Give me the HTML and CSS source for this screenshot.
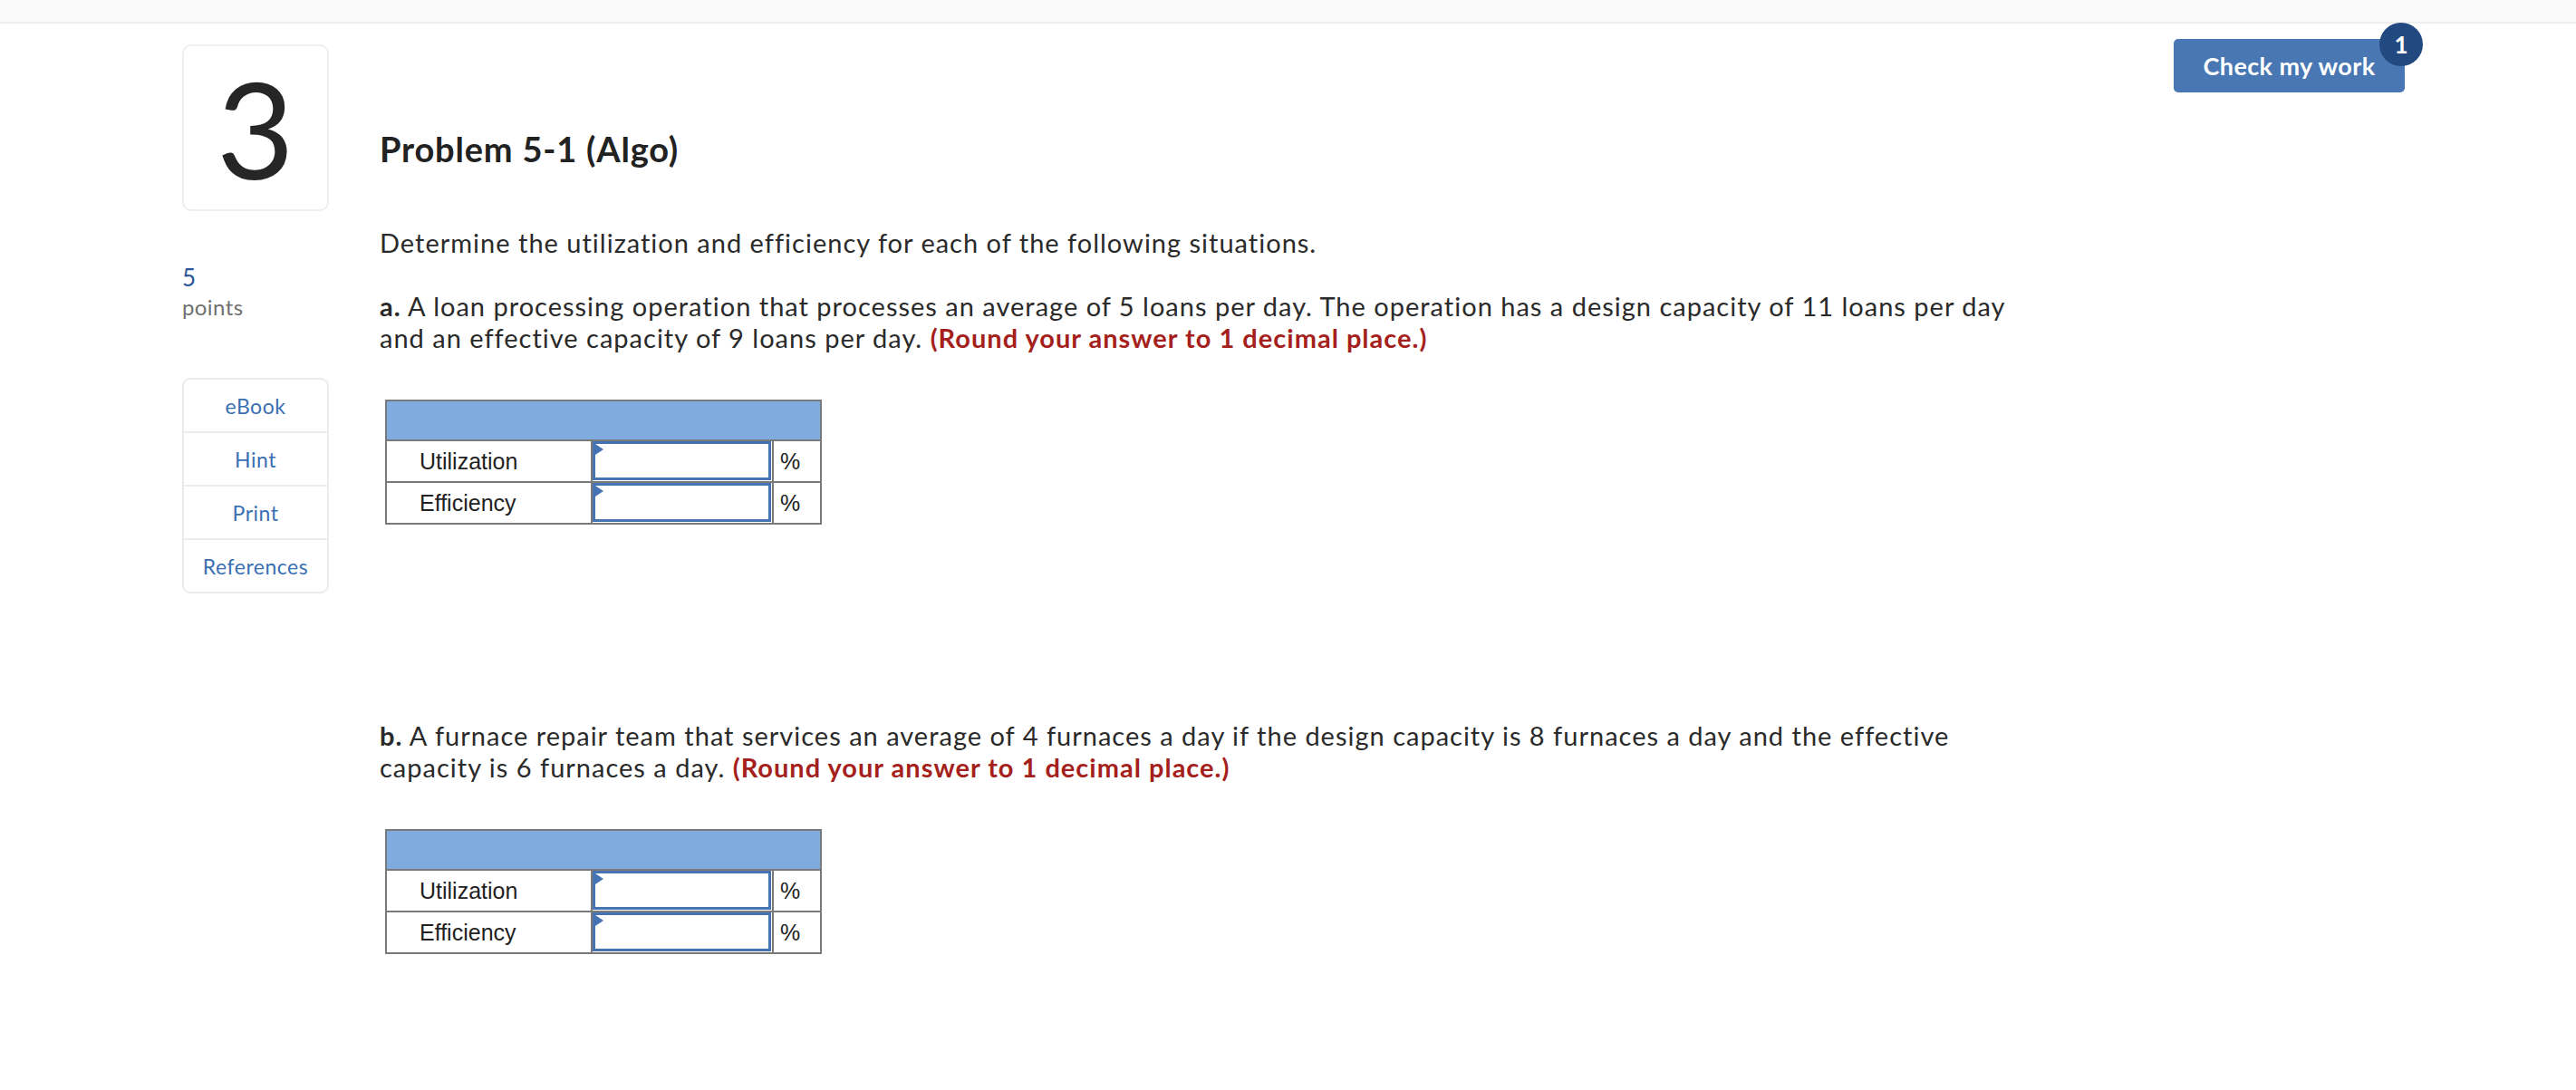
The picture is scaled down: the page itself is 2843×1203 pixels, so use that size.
FILE: index.html
```html
<!DOCTYPE html>
<html lang="en">
<head>
<meta charset="utf-8">
<title>Problem 5-1 (Algo)</title>
<link rel="stylesheet" href="styles.css">
</head>
<body>
<div class="topbar"></div>
<div class="page">
  <aside class="side">
    <div class="qnum">3</div>
    <div class="score">
      <div class="pts">5</div>
      <div class="pts-label">points</div>
    </div>
    <nav class="tools">
      <a class="tool">eBook</a>
      <a class="tool">Hint</a>
      <a class="tool">Print</a>
      <a class="tool">References</a>
    </nav>
  </aside>
  <main class="main">
    <h1 class="title">Problem 5-1 (Algo)</h1>
    <p class="intro">Determine the utilization and efficiency for each of the following situations.</p>
    <p class="part"><b>a.</b> A loan processing operation that processes an average of 5 loans per day. The operation has a design capacity of 11 loans per day and an effective capacity of 9 loans per day. <strong class="note">(Round your answer to 1 decimal place.)</strong></p>
    <table class="answer">
      <colgroup><col class="c1"><col class="c2"><col class="c3"></colgroup>
      <tr class="head"><td colspan="3"></td></tr>
      <tr><td class="label">Utilization</td><td class="inp"><div class="field"><span class="flag"></span></div></td><td class="unit">%</td></tr>
      <tr><td class="label">Efficiency</td><td class="inp"><div class="field"><span class="flag"></span></div></td><td class="unit">%</td></tr>
    </table>
    <p class="part part-b"><b>b.</b> A furnace repair team that services an average of 4 furnaces a day if the design capacity is 8 furnaces a day and the effective capacity is 6 furnaces a day. <strong class="note">(Round your answer to 1 decimal place.)</strong></p>
    <table class="answer">
      <colgroup><col class="c1"><col class="c2"><col class="c3"></colgroup>
      <tr class="head"><td colspan="3"></td></tr>
      <tr><td class="label">Utilization</td><td class="inp"><div class="field"><span class="flag"></span></div></td><td class="unit">%</td></tr>
      <tr><td class="label">Efficiency</td><td class="inp"><div class="field"><span class="flag"></span></div></td><td class="unit">%</td></tr>
    </table>
  </main>
  <div class="actions">
    <button class="check">Check my work<span class="badge">1</span></button>
  </div>
</div>
</body>
</html>
```

FILE: styles.css
```css
html, body {
  margin: 0;
  padding: 0;
  background: #ffffff;
}
body {
  font-family: "Lato", "Open Sans", sans-serif;
  color: #2a2a2a;
}
.topbar {
  height: 24px;
  background: #fafafa;
  border-bottom: 2px solid #efefef;
}
.page {
  display: flex;
  align-items: flex-start;
  padding: 0 189px 0 201px;
}
.side {
  width: 162px;
  flex: none;
  display: flex;
  flex-direction: column;
}
.qnum {
  margin-top: 23px;
  height: 184px;
  box-sizing: border-box;
  border: 2px solid #efefef;
  border-radius: 10px;
  display: flex;
  align-items: center;
  justify-content: center;
  font-size: 148px;
  font-weight: 400;
  line-height: 1;
  color: #262626;
}
.score {
  margin-top: 57px;
}
.pts {
  font-size: 26px;
  line-height: 32px;
  color: #2b5797;
}
.pts-label {
  margin-top: 3px;
  font-size: 24px;
  letter-spacing: 0.4px;
  line-height: 28px;
  color: #707070;
}
.tools {
  margin-top: 64px;
  border: 2px solid #ececec;
  border-radius: 9px;
  display: flex;
  flex-direction: column;
}
.tool {
  height: 57px;
  display: flex;
  align-items: center;
  justify-content: center;
  font-size: 23px;
  letter-spacing: 0.5px;
  color: #3b6fb3;
  border-top: 2px solid #ececec;
}
.tool:first-child {
  border-top: none;
}
.main {
  flex: 1;
  margin-left: 56px;
  min-width: 0;
}
.title {
  margin: 116px 0 0;
  font-size: 38px;
  letter-spacing: 0.8px;
  line-height: 44px;
  font-weight: 700;
  color: #222;
}
.intro {
  margin: 64px 0 0;
  font-size: 29px;
  letter-spacing: 1px;
  line-height: 35px;
}
.part {
  margin: 35px 0 0;
  max-width: 1830px;
  font-size: 29px;
  letter-spacing: 1px;
  line-height: 35px;
}
.part b {
  font-weight: 700;
}
.note {
  color: #a51f1c;
  font-weight: 700;
}
.part-b {
  margin-top: 215px;
}
.answer {
  margin: 51px 0 0 6px;
  width: 482px;
  table-layout: fixed;
  border-collapse: separate;
  border-spacing: 0;
  border-top: 2px solid #7a7a7a;
  border-left: 2px solid #7a7a7a;
  font-family: "Liberation Sans", Arial, sans-serif;
  font-size: 25px;
  letter-spacing: 0;
  color: #222;
}
.c1 { width: 227px; }
.c2 { width: 200px; }
.c3 { width: 53px; }
.answer td {
  border-right: 2px solid #7a7a7a;
  border-bottom: 2px solid #7a7a7a;
  height: 44px;
  padding: 0;
  box-sizing: border-box;
  vertical-align: middle;
}
.head td {
  background: #80abdf;
}
.answer .label {
  padding-left: 36px;
}
.answer .unit {
  padding-left: 7px;
}
.answer .inp {
  padding: 0 1px 1px 0;
  vertical-align: top;
}
.field {
  position: relative;
  height: 43px;
  box-sizing: border-box;
  border: 3px solid #4674b3;
  background: #fff;
}
.flag {
  position: absolute;
  top: 0;
  left: 0;
  width: 0;
  height: 0;
  border-left: 9px solid #4674b3;
  border-top: 6px solid transparent;
  border-bottom: 6px solid transparent;
}
.actions {
  flex: none;
  margin-top: 17px;
}
.check {
  position: relative;
  width: 255px;
  height: 59px;
  border: none;
  border-radius: 5px;
  background: #4877b3;
  color: #fff;
  font-family: "Lato", sans-serif;
  font-weight: 700;
  font-size: 27px;
  letter-spacing: 0.4px;
  padding: 0;
  text-align: center;
}
.badge {
  position: absolute;
  top: -18px;
  right: -20px;
  width: 48px;
  height: 48px;
  border-radius: 50%;
  background: #234a80;
  color: #fff;
  font-size: 26px;
  font-weight: 700;
  letter-spacing: 0;
  line-height: 48px;
  text-align: center;
}
```
